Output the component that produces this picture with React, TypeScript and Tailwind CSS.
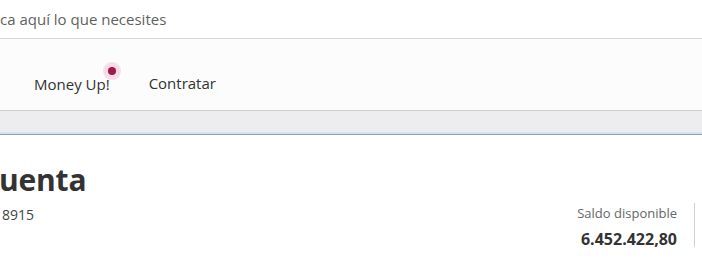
import React from "react";

export default function App() {
  return (
    <div className="w-[702px] h-[265px] overflow-hidden bg-white text-[#333333]" style={{ fontFamily: '"Open Sans", "Noto Sans", sans-serif' }}>
      {/* search bar */}
      <div className="h-[39px] flex items-center border-b border-[#d9d9d9] bg-white">
        <span className="text-[15px] text-[#5f5f5f] leading-none">ca aquí lo que necesites</span>
      </div>
      {/* nav */}
      <div className="h-[72px] bg-[#fcfcfc] border-b border-[#cfcfcf] flex items-center pl-[34px] gap-[39px] pt-[18px]">
        <div className="relative">
          <span className="text-[15px] text-[#333]">Money Up!</span>
          <span className="absolute -top-[10px] -right-[11px] w-[18px] h-[18px] rounded-full bg-[#f7dde8] flex items-center justify-center">
            <span className="w-[8px] h-[8px] rounded-full bg-[#a3174f]" />
          </span>
        </div>
        <span className="text-[15px] text-[#333]">Contratar</span>
      </div>
      {/* gray band */}
      <div className="h-[21px] bg-[#edecee]" />
      <div className="h-[2px] bg-[#d4e0f3]" />
      <div className="h-[1px] bg-[#8aa0bd]" />
      {/* content */}
      <div className="flex justify-between pt-[30px]">
        <div className="flex flex-col">
          <span className="text-[30px] font-bold leading-none -ml-[1px] tracking-[-0.2px]">uenta</span>
          <span className="text-[14px] text-[#444] mt-[9px] ml-[2px]">8915</span>
        </div>
        <div className="flex items-start pt-[42px] pr-[7px]">
          <div className="flex flex-col items-end mr-[17px]">
            <span className="text-[13px] text-[#666] leading-none">Saldo disponible</span>
            <span className="text-[16px] font-bold text-[#333] leading-none mt-[11px]">6.452.422,80</span>
          </div>
          <div className="w-px h-[44px] bg-[#d0d0d0] -mt-[4px]" />
        </div>
      </div>
    </div>
  );
}
